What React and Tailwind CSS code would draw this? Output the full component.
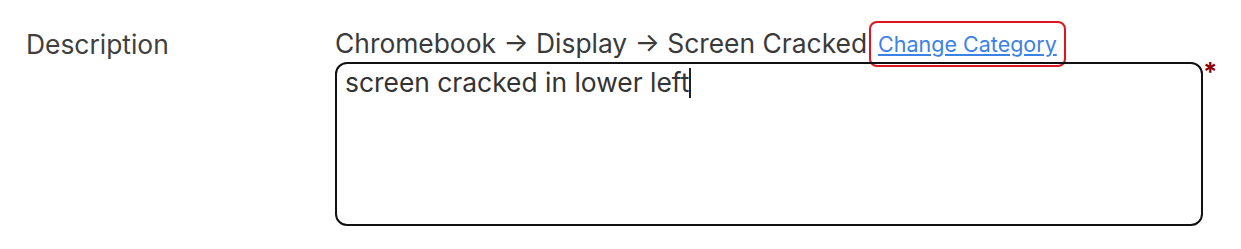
export default function App() {
  return (
    <div className="w-[1241px] h-[249px] bg-white font-['Inter',sans-serif]">
      <div className="flex pt-[26px] pl-[26px]">
        <div className="w-[309px] shrink-0 text-[26.4px] leading-[36px] text-[#3f3f3f]">Description</div>
        <div className="flex flex-col">
          <div className="flex items-center h-[36px] text-[26.4px] text-[#3a3a3a]">
            <span>Chromebook → Display → Screen Cracked</span>
            <span className="ml-[2px] px-[7px] py-[6px] border-2 border-[#e0141e] rounded-[8px]">
              <a href="#" className="block text-[21.5px] leading-[30px] text-[#3b82e6] underline underline-offset-2">
                Change Category
              </a>
            </span>
          </div>
          <div className="flex items-start">
            <div className="w-[868px] h-[164px] border-2 border-[#111] rounded-[12px] px-[8px] pt-[2px] text-[26.4px] leading-[32px] text-[#333]">
              screen cracked in lower left<span className="inline-block w-[2px] h-[30px] bg-[#222] align-[-6px]" />
            </div>
            <span className="text-[#8b0000] text-[26px] leading-[22px] font-bold -mt-[1px]">*</span>
          </div>
        </div>
      </div>
    </div>
  );
}
